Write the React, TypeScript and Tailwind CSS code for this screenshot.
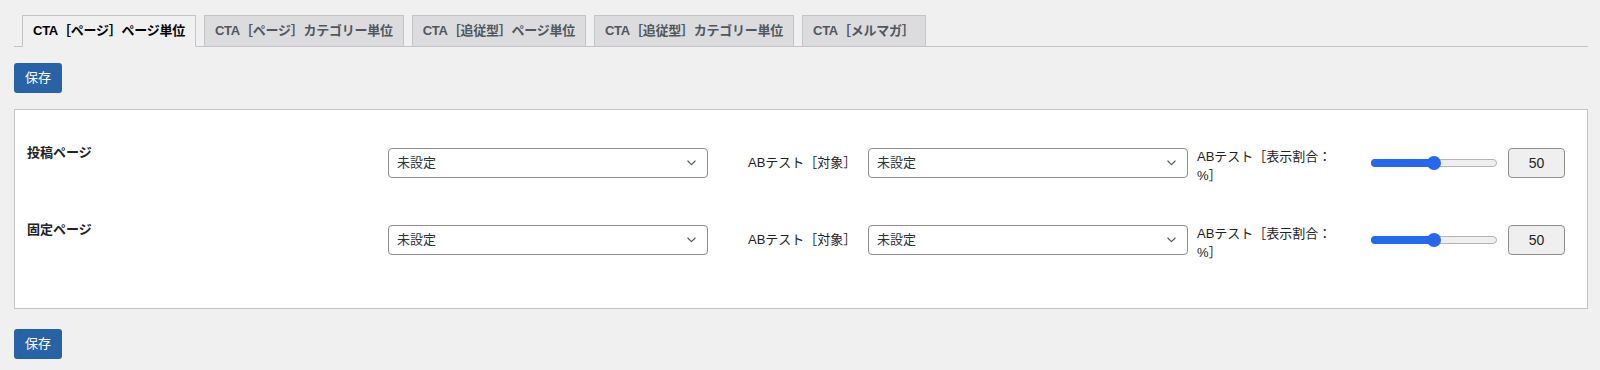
import React from "react";

const tabs = [
  "CTA［ページ］ページ単位",
  "CTA［ページ］カテゴリー単位",
  "CTA［追従型］ページ単位",
  "CTA［追従型］カテゴリー単位",
  "CTA［メルマガ］",
];

function Chevron() {
  return (
    <svg width="9" height="6" viewBox="0 0 9 6" fill="none">
      <polyline points="0.8,1 4.5,4.7 8.2,1" stroke="#50575e" strokeWidth="1.1" strokeLinecap="round" strokeLinejoin="round" />
    </svg>
  );
}

function Select() {
  return (
    <div className="mt-[5px] flex h-[30px] w-[320px] shrink-0 items-center justify-between rounded-[4px] border border-[#8c8f94] bg-white pl-[8px] pr-[11px] text-[13px] text-[#2c3338]">
      <span>未設定</span>
      <Chevron />
    </div>
  );
}

function Slider() {
  return (
    <div className="mt-[5px] flex h-[30px] w-[126px] shrink-0 items-center">
      <div className="relative h-[8px] w-full rounded-full border border-[#b5b5b5] bg-[#efefef]">
        <div className="absolute -left-px -top-px h-[8px] w-[64px] rounded-full bg-[#2467f0]" />
        <div className="absolute left-[55px] top-[-4px] h-[14px] w-[14px] rounded-full bg-[#2467f0]" />
      </div>
    </div>
  );
}

function Row({ label }: { label: string }) {
  return (
    <div className="flex h-[35px] items-start">
      <div className="w-[361px] shrink-0 text-[13px] font-semibold leading-[20px] text-[#1d2327]">{label}</div>
      <Select />
      <div className="ml-[40px] mt-[5px] flex h-[30px] w-[120px] shrink-0 items-center text-[13px] text-[#1d2327]">
        ABテスト［対象］
      </div>
      <Select />
      <div className="ml-[9px] mt-[4px] w-[174px] shrink-0 text-[13px] leading-[19px] text-[#1d2327]">
        ABテスト［表示割合：
        <br />
        %］
      </div>
      <Slider />
      <div className="ml-[11px] mt-[5px] flex h-[30px] w-[57px] shrink-0 items-center justify-center rounded-[4px] border border-[#8f8f8f] bg-[#efefef] text-[14px] text-[#1d2327]">
        50
      </div>
    </div>
  );
}

function SaveButton() {
  return (
    <button className="flex h-[30px] w-[48px] items-center justify-center rounded-[3px] bg-[#2863a8] text-[13px] text-white">
      保存
    </button>
  );
}

export default function App() {
  return (
    <div className="h-[370px] overflow-hidden bg-[#f0f0f1] pl-[14px] pr-[12px] pt-[15px] font-['Liberation_Sans','Noto_Sans_CJK_JP',sans-serif]">
      <div className="flex gap-[8px] border-b border-[#c3c4c7] pl-[8px]">
        {tabs.map((t, i) => (
          <div
            key={t}
            className={
              i === 0
                ? "-mb-px border border-[#c3c4c7] border-b-[#f0f0f1] bg-[#f0f0f1] px-[10px] py-[5px] text-[13px] font-semibold leading-[20px] tracking-[-0.25px] text-black"
                : "-mb-px border border-[#c3c4c7] bg-[#dcdcde] px-[10px] py-[5px] text-[13px] font-semibold leading-[20px] tracking-[-0.25px] text-[#50575e]"
            }
          >
            {t}
          </div>
        ))}
      </div>
      <div className="mt-[16px]">
        <SaveButton />
      </div>
      <div className="mt-[16px] flex flex-col gap-[42px] border border-[#c3c4c7] bg-white pb-[53px] pl-[12px] pr-[22px] pt-[33px]">
        <Row label="投稿ページ" />
        <Row label="固定ページ" />
      </div>
      <div className="mt-[20px]">
        <SaveButton />
      </div>
    </div>
  );
}
